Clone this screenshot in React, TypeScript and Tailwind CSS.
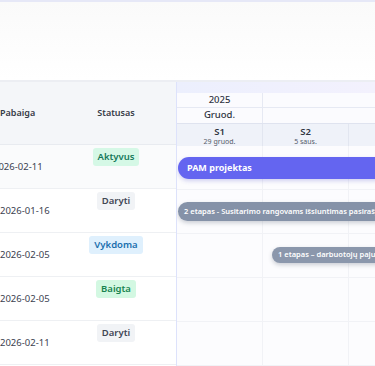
import React from "react";

type Row = { end: string; status: string; shift?: boolean };

const rows: Row[] = [
  { end: "2026-02-11", status: "Aktyvus", shift: true },
  { end: "2026-01-16", status: "Daryti" },
  { end: "2026-02-05", status: "Vykdoma" },
  { end: "2026-02-05", status: "Baigta" },
  { end: "2026-02-11", status: "Daryti" },
];

const badge: Record<string, string> = {
  Aktyvus: "bg-[#d5f8e6] text-[#14795a]",
  Daryti: "bg-[#f1f3f6] text-[#3f4654]",
  Vykdoma: "bg-[#dff0fd] text-[#1a6fae]",
  Baigta: "bg-[#d3f8e2] text-[#17834f]",
};

export default function App() {
  return (
    <div className="w-[375px] h-[366px] overflow-hidden bg-white font-['Noto_Sans',sans-serif]">
      <div className="h-[2px] bg-[#e6e8f7]" />
      <div className="h-[80px] bg-gradient-to-b from-[#fafafa] to-white border-b-[2px] border-[#eceef3]" />
      <div className="flex">
        {/* left table */}
        <div className="w-[176px] shrink-0">
          <div className="h-[63px] bg-[#f4f6f9] flex items-center text-[9px] font-semibold text-[#343a46] border-b border-[#e8ebf0]">
            <div className="w-[56px]">Pabaiga</div>
            <div className="flex-1 text-center">Statusas</div>
          </div>
          {rows.map((r, i) => (
            <div
              key={i}
              className={`h-[44px] flex border-b border-[#eef0f3] ${i === 0 ? "bg-[#fafbfc]" : "bg-white"}`}
            >
              <div className="w-[56px] flex items-center pt-[2px] text-[9.5px] text-[#3c4250] whitespace-nowrap">
                <span className={r.shift ? "-ml-[7px]" : ""}>{r.end}</span>
              </div>
              <div className="flex-1 flex justify-center pt-[3px]">
                <span className={`h-[18px] px-[5px] rounded-[3px] text-[9.5px] font-semibold leading-[18px] ${badge[r.status]}`}>
                  {r.status}
                </span>
              </div>
            </div>
          ))}
        </div>

        {/* gantt */}
        <div className="flex-1 overflow-hidden border-l border-[#dde2fb] bg-[#fcfcfe]">
          <div className="h-[11px] bg-gradient-to-r from-[#eceffd] to-[#f3f1fd]" />
          <div className="flex h-[15px] bg-[#fbfbfe] border-b border-[#e6e9f3] text-[9.5px] font-medium text-[#2f3542]">
            <div className="w-[86px] shrink-0 flex items-center justify-center border-r border-[#e6e9f3]">2025</div>
            <div className="flex-1" />
          </div>
          <div className="flex h-[16px] bg-[#fbfbfe] border-b border-[#dfe3ef] text-[9.5px] font-medium text-[#2f3542]">
            <div className="w-[86px] shrink-0 flex items-center justify-center border-r border-[#e6e9f3]">Gruod.</div>
            <div className="flex-1" />
          </div>
          <div className="flex h-[22px] bg-[#eff2f9] text-[#2f3542]">
            <div className="w-[86px] shrink-0 flex flex-col items-center border-r border-[#e2e6f0] leading-none pt-[2px]">
              <span className="text-[9.5px] font-semibold leading-[11px]">S1</span>
              <span className="text-[7px] text-[#555c6a] leading-[9px]">29 gruod.</span>
            </div>
            <div className="w-[86px] shrink-0 flex flex-col items-center border-r border-[#e2e6f0] leading-none pt-[2px]">
              <span className="text-[9.5px] font-semibold leading-[11px]">S2</span>
              <span className="text-[7px] text-[#555c6a] leading-[9px]">5 saus.</span>
            </div>
            <div className="flex-1" />
          </div>

          <div className="relative">
            {rows.map((_, i) => (
              <div key={i} className="h-[44px] flex border-b border-[#f1f2f6]">
                <div className="w-[86px] shrink-0 border-r border-[#f1f2f6]" />
                <div className="w-[86px] shrink-0 border-r border-[#f1f2f6]" />
                <div className="flex-1" />
              </div>
            ))}

            <div className="absolute left-[1px] top-[11px] w-[260px] h-[22px] rounded-l-full bg-[#6465f0] shadow-[0_2px_4px_rgba(80,80,200,0.25)] flex items-center pl-[9px] text-[9px] font-bold text-white whitespace-nowrap">
              PAM projektas
            </div>
            <div className="absolute left-[1px] top-[56px] w-[260px] h-[19px] rounded-l-full bg-[#8592a8] shadow-[0_2px_4px_rgba(60,70,90,0.25)] flex items-center pl-[6px] text-[7.5px] font-semibold text-white whitespace-nowrap overflow-hidden">
              2 etapas - Susitarimo rangovams išsiuntimas pasirašymui
            </div>
            <div className="absolute left-[95px] top-[101px] w-[200px] h-[16px] rounded-l-full bg-[#8b97ac] shadow-[0_2px_4px_rgba(60,70,90,0.25)] flex items-center pl-[6px] text-[7.5px] font-semibold text-white whitespace-nowrap overflow-hidden">
              1 etapas – darbuotojų pajudėjimas
            </div>
          </div>
        </div>
      </div>
    </div>
  );
}
